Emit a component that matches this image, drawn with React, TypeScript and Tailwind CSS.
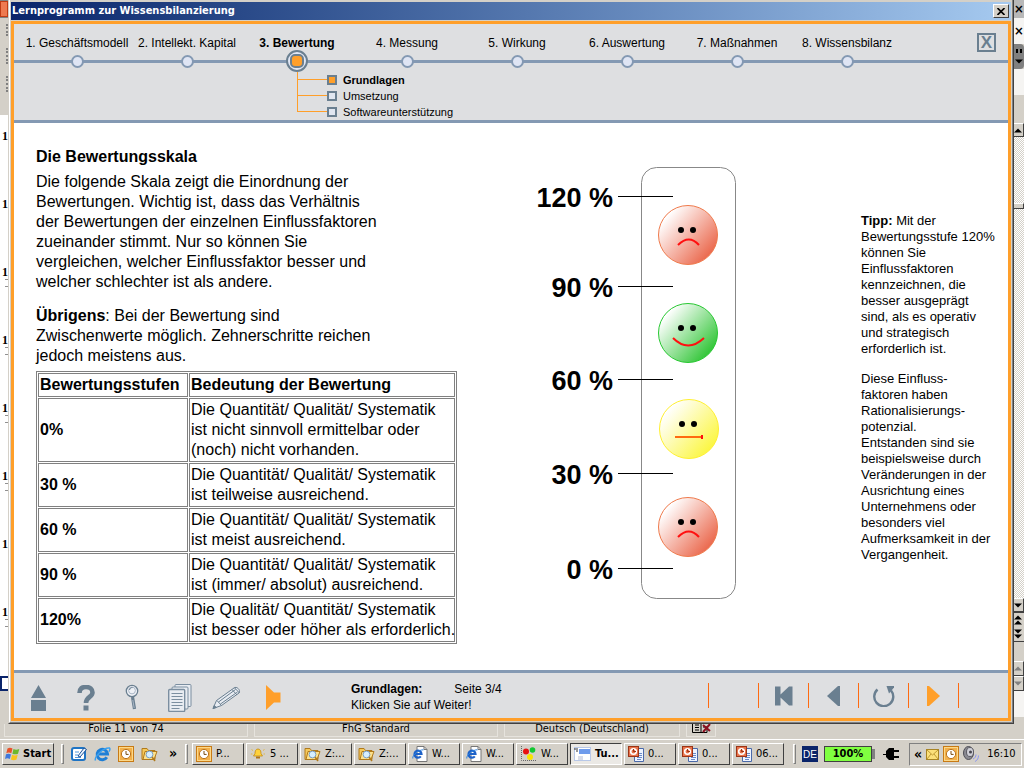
import React from 'react';
import clsx from 'clsx';

const chapters = [
  '1. Geschäftsmodell',
  '2. Intellekt. Kapital',
  '3. Bewertung',
  '4. Messung',
  '5. Wirkung',
  '6. Auswertung',
  '7. Maßnahmen',
  '8. Wissensbilanz',
];

const sections = ['Grundlagen', 'Umsetzung', 'Softwareunterstützung'];

const levels = [
  { value: '0%', lines: ['Die Quantität/ Qualität/ Systematik', 'ist nicht sinnvoll ermittelbar oder', '(noch) nicht vorhanden.'] },
  { value: '30 %', lines: ['Die Quantität/ Qualität/ Systematik', 'ist teilweise ausreichend.'] },
  { value: '60 %', lines: ['Die Quantität/ Qualität/ Systematik', 'ist meist ausreichend.'] },
  { value: '90 %', lines: ['Die Quantität/ Qualität/ Systematik', 'ist (immer/ absolut) ausreichend.'] },
  { value: '120%', lines: ['Die Qualität/ Quantität/ Systematik', 'ist besser oder höher als erforderlich.'] },
];

const raised = 'border border-t-white border-l-white border-r-[#404040] border-b-[#404040] bg-[#d4d0c8]';

const Lines = ({ lines }: { lines: string[] }) => (
  <>
    {lines.map((line, i) => (
      <React.Fragment key={line}>
        {i > 0 && <br />}
        {line}
      </React.Fragment>
    ))}
  </>
);

/* ---------- icons ---------- */

const ClockIcon = () => (
  <svg width="16" height="16" viewBox="0 0 16 16">
    <rect x="0.5" y="0.5" width="15" height="15" fill="#fbd88a" stroke="#c87a14" />
    <rect x="2" y="2" width="12" height="12" fill="#f3b04a" />
    <circle cx="8" cy="8" r="4.6" fill="#fff" stroke="#b8721c" />
    <path d="M8 5v3.4h2.6" fill="none" stroke="#7a4a10" />
  </svg>
);

const FolderIcon = () => (
  <svg width="17" height="16" viewBox="0 0 17 16">
    <path d="M1 2.500h5l1.500 2H14V13.500H1z" fill="#f6c95a" stroke="#b07a1c" />
    <path d="M2 13.500l2-8h12l-3 8z" fill="#fde18c" stroke="#b07a1c" />
    <circle cx="8.500" cy="8.500" r="3.400" fill="#d6efff" stroke="#7aa0c4" />
    <path d="M11 11l3 4" stroke="#b07a1c" strokeWidth="1.500" />
  </svg>
);

const IeIcon = () => (
  <svg width="17" height="16" viewBox="0 0 17 16">
    <path d="M12.800 11.200A5.200 5.200 0 1 1 13.500 8H5" fill="none" stroke="#1f7fd6" strokeWidth="3" />
    <path d="M1.500 14.500C0 11 9 1.500 15.500 2c1 1.200.2 2.500-.6 3.600" fill="none" stroke="#3aa0ee" strokeWidth="1.500" />
  </svg>
);

const IePageIcon = () => (
  <svg width="16" height="16" viewBox="0 0 16 16">
    <path d="M5 .5h7l3 3v12H5z" fill="#fff" stroke="#777" />
    <path d="M12 .5v3h3" fill="none" stroke="#777" />
    <path d="M8.800 10.300A3.500 3.500 0 1 1 9.500 8H3" fill="none" stroke="#1e62c8" strokeWidth="2.200" />
    <path d="M.8 12.500C0 9 7 3.500 11.500 3.800" fill="none" stroke="#2c83e0" />
  </svg>
);

const PptIcon = () => (
  <svg width="16" height="16" viewBox="0 0 16 16">
    <path d="M6.500 2.500h9v13h-9z" fill="#eef4ff" stroke="#4a69a8" />
    <path d="M9 7.500h5M9 9.500h5M9 11.500h5M9 13.500h4" stroke="#6a8ac8" />
    <rect x="0.5" y="0.5" width="10" height="10" fill="#e8744c" stroke="#9c3416" />
    <circle cx="5.500" cy="5.500" r="2.800" fill="none" stroke="#fff" strokeWidth="1.600" />
    <path d="M5.500 5.500V3M5.500 5.500H8" stroke="#9c3416" />
  </svg>
);

const DesktopIcon = () => (
  <svg width="16" height="16" viewBox="0 0 16 16">
    <rect x="1" y="2" width="13" height="12" rx="2" fill="#fff" stroke="#1f74c4" strokeWidth="2" />
    <path d="M4 6h4M4 9h3M4 11.500h6" stroke="#4f97dc" />
    <path d="M7 10l6-8 2.500 1.500L9 11z" fill="#eaf4ff" stroke="#1a4f94" />
  </svg>
);

const BellIcon = () => (
  <svg width="16" height="16" viewBox="0 0 16 16">
    <path d="M8 3c2.500 0 3 2.500 3 4.500L12.500 10h-9L5 7.500C5 5.500 5.500 3 8 3z" fill="#ffd23c" stroke="#c08a14" strokeWidth=".8" />
    <path d="M6 11.500h4" stroke="#b0761a" strokeWidth="2" />
    <path d="M1.500 3.500l1.500 1M14.500 3.500l-1.500 1M.8 8H2.500M15 8h-1.500" stroke="#e0b84a" />
  </svg>
);

const DotsIcon = () => (
  <svg width="17" height="16" viewBox="0 0 17 16">
    <path d="M1.500 0v14.500H17" fill="none" stroke="#666" strokeDasharray="1 1" />
    <circle cx="6" cy="5.500" r="3" fill="#e81010" />
    <circle cx="12.500" cy="4" r="2.800" fill="#12c832" />
    <circle cx="10" cy="11" r="3" fill="#f8e400" />
  </svg>
);

const TutorialIcon = () => (
  <svg width="17" height="16" viewBox="0 0 17 16">
    <rect x="0.5" y="1.500" width="16" height="13" fill="#fff" stroke="#b8c8e8" />
    <rect x="5" y="3" width="11" height="5" fill="#6f9cec" />
    <path d="M0 3h4M2 5h2" stroke="#333" />
    <rect x="4" y="10" width="5" height="4" fill="#d8dce8" />
  </svg>
);

const WindowsIcon = () => (
  <svg width="16" height="14" viewBox="0 0 16 14">
    <path d="M2.500 1.500C4.500.4 6 .8 7.500 1.600L6.300 6.300C4.800 5.500 3.300 5.300 1.300 6.200z" fill="#e8522a" />
    <path d="M8.500 2c1.800.9 3.600.9 5.800 0L13 6.700c-2 .9-3.800.8-5.600 0z" fill="#6cb82c" />
    <path d="M1 7.300c2-.9 3.500-.7 5 .1L4.800 12C3.300 11.200 1.800 11 0 11.900z" fill="#3f78dc" />
    <path d="M7.100 7.800c1.800.8 3.600.8 5.600 0l-1.200 4.700c-2 .9-3.800.8-5.600 0z" fill="#f8c41c" />
  </svg>
);

const PlugIcon = () => (
  <svg width="17" height="14" viewBox="0 0 17 14">
    <path d="M0 7h3V4l3-3h5v12H6l-3-3V8H0zM11 3h5v2h-5zM11 9h5v2h-5z" fill="#000" />
  </svg>
);

const MailIcon = () => (
  <svg width="13" height="11" viewBox="0 0 13 11">
    <rect x="0.500" y="0.500" width="12" height="10" fill="#fbe07a" stroke="#a88424" />
    <path d="M1 1l5.500 5L12 1M1 10l4-5M12 10L8 5" fill="none" stroke="#c09a34" />
  </svg>
);

const SpeakerIcon = () => (
  <svg width="16" height="16" viewBox="0 0 16 16">
    <ellipse cx="5.500" cy="7" rx="5" ry="6.500" fill="#8a8a92" stroke="#4c4c54" />
    <ellipse cx="7" cy="6" rx="3.500" ry="4.500" fill="#d0d0d8" stroke="#5a5a62" />
    <circle cx="7.500" cy="6" r="1.500" fill="#44444c" />
    <path d="M10 13c2-.8 3-2.500 3-4.500M12 15.500c2.500-1.200 3.500-3.500 3.500-6" fill="none" stroke="#8c96f0" />
  </svg>
);

const SpellIcon = () => (
  <svg width="20" height="10" viewBox="0 0 20 10">
    <path d="M1.500 0v8.500H10V0M10 8.500h6V2M4 1h4M4 3.500h4M4 6h4M12 3h3" fill="none" stroke="#000" />
    <path d="M12 1l7 6M19 0l-7 8" stroke="#8c1020" strokeWidth="2" />
  </svg>
);

const HomeIcon = () => (
  <svg width="17" height="26" viewBox="0 0 17 26">
    <path d="M8.500 0L16 13H1zM1 15h15v11H1z" fill="#6a7f90" />
  </svg>
);

const QuestionIcon = () => (
  <svg width="18" height="26" viewBox="0 0 18 26">
    <path d="M2.500 8C2.500 3.500 5 2 9 2s6.500 2 6.500 5.500C15.500 12 9 12 9 18" fill="none" stroke="#6a7f90" strokeWidth="4.600" />
    <rect x="6.500" y="20.500" width="5" height="5" fill="#6a7f90" />
  </svg>
);

const MagnifierIcon = () => (
  <svg width="15" height="27" viewBox="0 0 15 27">
    <circle cx="7" cy="7" r="5.700" fill="#eef1f6" stroke="#6a7f90" strokeWidth="1.300" />
    <circle cx="7" cy="6.500" r="3.400" fill="none" stroke="#a9b6c6" />
    <path d="M4.500 6c.4-1.800 1.600-2.600 3-2.400" fill="none" stroke="#6a7f90" />
    <path d="M7.500 13l2 12" stroke="#6a7f90" strokeWidth="3.200" />
    <path d="M7.800 16l1.400 8" stroke="#a9b6c6" />
  </svg>
);

const PagesIcon = () => (
  <svg width="24" height="28" viewBox="0 0 24 28" fill="#e8ecf2" stroke="#7b8ea0">
    <rect x="7" y="0.500" width="16" height="22" rx="1" />
    <rect x="4" y="3" width="16" height="22" rx="1" />
    <rect x="0.700" y="5.500" width="16" height="22" rx="1" strokeWidth="1.400" />
    <path d="M3.500 9.500h11M3.500 12.500h11M3.500 15.500h11M3.500 18.500h11M3.500 21.500h11M3.500 24.500h8" />
  </svg>
);

const PencilIcon = () => (
  <svg width="29" height="24" viewBox="0 0 29 24" fill="#e8ecf2" stroke="#6a7f90">
    <path d="M1 22.500l3.500-8L22 2c2.500-2.200 7 2 5 5L9.500 19.500z" />
    <path d="M5 14.500l4.500 5M6.500 16L23.500 3.500M8.500 18L25.500 6M20 3.500l5 5.500M22.500 1.800l5 5.200" />
    <path d="M1 22.500l1.300-3 2 2z" fill="#6a7f90" />
  </svg>
);

const SoundIcon = () => (
  <svg width="15" height="25" viewBox="0 0 15 25">
    <path d="M0 0v25l8-7.500h6.500v-10H8z" fill="#ff9f2a" />
  </svg>
);

const FirstIcon = () => (
  <svg width="18" height="20" viewBox="0 0 18 20">
    <path d="M0 .5h5.500v8L14 .5h3.500v19H14l-8.500-8v8H0z" fill="#6a7f90" />
  </svg>
);

const BackIcon = () => (
  <svg width="13" height="20" viewBox="0 0 13 20">
    <path d="M13 0v20h-2L0 10 11 0z" fill="#6a7f90" />
  </svg>
);

const RepeatIcon = () => (
  <svg width="22" height="22" viewBox="0 0 22 22">
    <path d="M4.500 4.500A9.500 9.500 0 1 0 18 5.500" fill="none" stroke="#6a7f90" strokeWidth="2.400" />
    <path d="M13.500 1H21v1.500L16 8.500z" fill="#6a7f90" />
  </svg>
);

const NextIcon = () => (
  <svg width="13" height="20" viewBox="0 0 13 20">
    <path d="M0 0h2l11 10L2 20H0z" fill="#ff9f2a" />
  </svg>
);

/* ---------- rating scale ---------- */

const marks = [
  { label: '120 %', y: 33 },
  { label: '90 %', y: 123 },
  { label: '60 %', y: 216 },
  { label: '30 %', y: 310 },
  { label: '0 %', y: 405 },
];

const faces = [
  { x: 155, y: 72, fill: 'url(#red)', stroke: '#ef7a4c', mouth: 'M145 82q11-11 21 0', color: '#ff1010' },
  { x: 155, y: 170, fill: 'url(#green)', stroke: '#28c832', mouth: 'M140 175q15 15 31 0', color: '#ff1010' },
  { x: 156, y: 266, fill: 'url(#yellow)', stroke: '#fff030', mouth: 'M142 274h27', color: '#ff6a10' },
  { x: 155, y: 364, fill: 'url(#red)', stroke: '#ef7a4c', mouth: 'M145 374q11-11 21 0', color: '#ff1010' },
];

const gradients = [
  { id: 'red', color: '#ea6448' },
  { id: 'green', color: '#2cc432' },
  { id: 'yellow', color: '#fbf63c' },
];

const Scale = () => (
  <svg width="206" height="440" viewBox="0 0 206 440" className="shrink-0" role="img" aria-label="Bewertungsskala">
    <defs>
      {gradients.map((g) => (
        <linearGradient key={g.id} id={g.id} x1="0.1" y1="0.15" x2="0.9" y2="0.85">
          <stop offset="0.05" stopColor="#fff" />
          <stop offset="1" stopColor={g.color} />
        </linearGradient>
      ))}
    </defs>
    <rect x="108.500" y="4.500" width="94" height="431" rx="15" fill="#fff" stroke="#888" />
    {marks.map((m) => (
      <g key={m.label}>
        <text x="80" y={m.y + 11} textAnchor="end" className="font-['Liberation_Sans',sans-serif] text-[27px] font-bold">
          {m.label}
        </text>
        <path d={`M85 ${m.y + 0.5}h55`} stroke="#000" />
      </g>
    ))}
    {faces.map((f) => (
      <g key={f.y}>
        <circle cx={f.x} cy={f.y} r="29.500" fill={f.fill} stroke={f.stroke} />
        <circle cx={f.x - 7} cy={f.y - 5} r="3" />
        <circle cx={f.x + 5} cy={f.y - 5} r="3" />
        <path d={f.mouth} fill="none" stroke={f.color} strokeWidth="2" />
      </g>
    ))}
    <path d="M169 272v4" stroke="#ff1010" strokeWidth="2" />
  </svg>
);

/* ---------- learning program window ---------- */

const TitleBar = () => (
  <div className="flex h-[18px] items-center justify-between bg-linear-to-r from-[#0a246a] to-[#a6caf0] pr-0.5">
    <h1 className="pl-px font-['DejaVu_Sans_Condensed','DejaVu_Sans',sans-serif] text-[11px] font-bold text-white">
      Lernprogramm zur Wissensbilanzierung
    </h1>
    <button aria-label="Schließen" className={clsx(raised, 'flex h-3.5 w-4 items-center justify-center')}>
      <svg width="8" height="7" viewBox="0 0 8 7">
        <path d="M.5 0l7 7M7.500 0l-7 7" stroke="#000" strokeWidth="1.600" />
      </svg>
    </button>
  </div>
);

const Header = () => (
  <header className="border-b-[3px] border-[#8499b3] bg-[#dedfe1] text-[12px]">
    <div className="grid">
      <div className="col-start-1 row-start-1 mb-[9px] h-[3px] self-end bg-[#8499b3]" />
      <div className="col-start-1 row-start-1 flex">
        <nav className="ml-2 grid flex-1 grid-cols-8">
          {chapters.map((chapter, i) => (
            <button key={chapter} className="flex flex-col items-center whitespace-nowrap">
              <span className={clsx('pt-3 leading-[14px]', i === 2 && 'font-bold')}>{chapter}</span>
              <span className="flex h-[22px] items-center">
                {i === 2 ? (
                  <span className="flex size-[22px] items-center justify-center rounded-full border-2 border-[#6a7f90] bg-[#e0e6f4]">
                    <span className="size-3.5 rounded-[5px] border-2 border-[#6a7f90] bg-[#ff9f2a]" />
                  </span>
                ) : (
                  <span className="size-[13px] rounded-full border-2 border-[#8499b3] bg-[#dfe5f4]" />
                )}
              </span>
            </button>
          ))}
        </nav>
        <div className="flex w-[106px] justify-end pt-[9px] pr-3">
          <button className="flex size-[19px] items-center justify-center border-2 border-[#6a7f90] text-[17px] leading-none font-bold text-[#6a7f90]">
            X
          </button>
        </div>
      </div>
    </div>
    <div className="mr-[106px] ml-2 grid grid-cols-8">
      <ul className="col-span-3 col-start-3 pl-[55px] text-[11px]">
        {sections.map((section, i) => (
          <li key={section} className="flex h-4 items-center">
            <span className="flex h-4 w-[30px] flex-col">
              <span className="h-2 border-b border-l border-[#ff9f2a]" />
              {i < 2 && <span className="h-2 border-l border-[#ff9f2a]" />}
            </span>
            <span className={clsx('size-2.5 border-2 border-[#6a7f90]', i === 0 ? 'bg-[#ff9f2a]' : 'bg-[#e0e6f0]')} />
            <a href="#" className={clsx('ml-1.5', i === 0 && 'font-bold')}>
              {section}
            </a>
          </li>
        ))}
      </ul>
    </div>
  </header>
);

const Content = () => (
  <main className="flex flex-1 items-start bg-white pl-[22px] text-black">
    <section className="w-[419px] pt-6 text-[16px] leading-5">
      <h2 className="font-bold">Die Bewertungsskala</h2>
      <p className="mt-[5px] whitespace-nowrap">
        <Lines
          lines={[
            'Die folgende Skala zeigt die Einordnung der',
            'Bewertungen. Wichtig ist, dass das Verhältnis',
            'der Bewertungen der einzelnen Einflussfaktoren',
            'zueinander stimmt. Nur so können Sie',
            'vergleichen, welcher Einflussfaktor besser und',
            'welcher schlechter ist als andere.',
          ]}
        />
      </p>
      <p className="mt-3.5 whitespace-nowrap">
        <b>Übrigens</b>
        <Lines lines={[': Bei der Bewertung sind', 'Zwischenwerte möglich. Zehnerschritte reichen', 'jedoch meistens aus.']} />
      </p>
      <table className="mt-[5px] w-[421px] table-fixed border-separate border-spacing-px border border-[#808080] text-left whitespace-nowrap">
        <thead>
          <tr>
            <th className="w-[150px] border border-[#808080] p-px">Bewertungsstufen</th>
            <th className="border border-[#808080] p-px">Bedeutung der Bewertung</th>
          </tr>
        </thead>
        <tbody>
          {levels.map((level) => (
            <tr key={level.value}>
              <th className="border border-[#808080] p-px">{level.value}</th>
              <td className="border border-[#808080] p-px">
                <Lines lines={level.lines} />
              </td>
            </tr>
          ))}
        </tbody>
      </table>
    </section>
    <div className="flex flex-1 justify-center pt-10 pr-11">
      <Scale />
    </div>
    <aside className="w-[147px] pt-[90px] text-[13px] leading-4 whitespace-nowrap">
      <p>
        <b>Tipp:</b>{' '}
        <Lines
          lines={[
            'Mit der',
            'Bewertungsstufe 120%',
            'können Sie',
            'Einflussfaktoren',
            'kennzeichnen, die',
            'besser ausgeprägt',
            'sind, als es operativ',
            'und strategisch',
            'erforderlich ist.',
          ]}
        />
      </p>
      <p className="mt-3.5">
        <Lines
          lines={[
            'Diese Einfluss-',
            'faktoren haben',
            'Rationalisierungs-',
            'potenzial.',
            'Entstanden sind sie',
            'beispielsweise durch',
            'Veränderungen in der',
            'Ausrichtung eines',
            'Unternehmens oder',
            'besonders viel',
            'Aufmerksamkeit in der',
            'Vergangenheit.',
          ]}
        />
      </p>
    </aside>
  </main>
);

const tools = [
  { label: 'Start', icon: <HomeIcon /> },
  { label: 'Hilfe', icon: <QuestionIcon /> },
  { label: 'Suche', icon: <MagnifierIcon /> },
  { label: 'Dokumente', icon: <PagesIcon /> },
  { label: 'Notizen', icon: <PencilIcon /> },
  { label: 'Ton', icon: <SoundIcon /> },
];

const pager = [
  { label: 'Anfang', icon: <FirstIcon /> },
  { label: 'Zurück', icon: <BackIcon /> },
  { label: 'Wiederholen', icon: <RepeatIcon /> },
  { label: 'Weiter', icon: <NextIcon /> },
];

const Footer = () => (
  <footer className="flex h-12 items-center border-t-[3px] border-[#8499b3] bg-[#dedfe1] pl-px">
    {tools.map((tool) => (
      <button key={tool.label} aria-label={tool.label} className="flex w-[47px] items-center justify-center pt-1">
        {tool.icon}
      </button>
    ))}
    <div className="ml-[54px] pt-0.5 text-[12px] leading-4">
      <p className="flex gap-8">
        <b>Grundlagen:</b>
        <span>Seite 3/4</span>
      </p>
      <p>Klicken Sie auf Weiter!</p>
    </div>
    <div className="mr-[49px] ml-auto flex h-[25px] border-r border-[#ff6a10]">
      <span className="w-[50px] border-l border-[#ff6a10]" />
      {pager.map((item) => (
        <button key={item.label} aria-label={item.label} className="flex w-[50px] items-center justify-center border-l border-[#ff6a10]">
          {item.icon}
        </button>
      ))}
    </div>
  </footer>
);

/* ---------- what shows of the windows behind ---------- */

const LeftEdge = () => (
  <div className="flex w-2 flex-col overflow-hidden bg-white font-['Liberation_Serif',serif] text-[12px] font-bold">
    <div className="flex h-[18px] items-center bg-[#808080]">
      <span className="h-4 w-2 border border-[#c03c14] bg-[#ee7a50]" />
    </div>
    <div className="flex h-[97px] flex-col gap-3 bg-[#d4d0c8] pt-1.5 pl-1.5">
      <span className="h-3 border-l-2 border-dotted border-[#808080]" />
      <span className="h-4 border-l-2 border-dotted border-[#808080]" />
      <span className="h-4 border-l-2 border-dotted border-[#808080]" />
    </div>
    <div className="flex-1 pt-3.5">
      {[0, 1, 2, 3, 4, 5, 6, 7].map((n) => (
        <div key={n} className="h-[68px] pl-0.5 leading-[14px]">
          1
          <span className={clsx('ml-[3px] block h-2 w-1 border-y border-[#909090]', (n === 0 || n === 1 || n === 6) && 'invisible')} />
        </div>
      ))}
    </div>
    <div className="h-[15px] border-2 border-r-0 border-[#0a246a] bg-white" />
    <div className="h-[33px] bg-[#d4d0c8]" />
  </div>
);

const Arrow = ({ down, muted }: { down?: boolean; muted?: boolean }) => (
  <svg width="8" height="5" viewBox="0 0 8 5">
    <path d={down ? 'M0 .5h8l-4 4z' : 'M0 4.500h8l-4-4z'} fill={muted ? '#808080' : '#000'} />
  </svg>
);

const RightEdge = () => (
  <div className="flex w-2.5 flex-col overflow-hidden bg-[#d4d0c8]">
    <div className="flex h-[18px] items-center bg-[#b8b8b8] text-[13px] font-bold">×</div>
    <div className="flex h-[26px] items-center bg-[#f5f4f2] text-[13px] font-bold">×</div>
    <div className="flex h-[25px] flex-col items-center justify-center gap-1.5 rounded-r-sm bg-[#808080]">
      <span className="h-1 w-1.5 border-x-2 border-black" />
      <Arrow down />
    </div>
    <div className="h-[26px] bg-[#f5f4f2]" />
    <div className="h-7" />
    <div className={clsx(raised, 'flex h-3.5 items-center border-l-0')}>
      <Arrow />
    </div>
    <div className="flex flex-1 flex-col bg-[repeating-conic-gradient(#fff_0_25%,#d4d0c8_0_50%)] bg-[length:2px_2px]">
      <div className={clsx(raised, 'mt-[66px] h-1.5 border-l-0')} />
    </div>
    <div className={clsx(raised, 'flex h-3.5 items-center border-l-0')}>
      <Arrow down />
    </div>
    <div className="flex h-[15px] flex-col justify-center border-t border-[#404040]">
      <Arrow />
      <Arrow />
    </div>
    <div className="flex h-[15px] flex-col justify-center border-b border-[#404040]">
      <Arrow down />
      <Arrow down />
    </div>
    <div className="h-[19px]" />
    <div className={clsx(raised, 'flex h-[15px] items-center border-l-0')}>
      <Arrow muted />
    </div>
    <div className={clsx(raised, 'flex h-[15px] items-center border-l-0')}>
      <Arrow down muted />
    </div>
    <div className="h-[26px] bg-[#f5f4f2]" />
    <div className="h-[7px]" />
  </div>
);

const StatusBar = () => (
  <div className="flex h-[15px] gap-1.5 pb-0.5 pl-1 text-center leading-[9px] whitespace-nowrap *:border *:border-t-0 *:border-[#e6e3dd]">
    <span className="w-[244px]">Folie 11 von 74</span>
    <span className="w-[244px]">FhG Standard</span>
    <span className="w-44">Deutsch (Deutschland)</span>
    <span className="flex w-[30px] justify-center">
      <SpellIcon />
    </span>
  </div>
);

const tasks = [
  { label: 'P...', icon: <ClockIcon /> },
  { label: '5 ...', icon: <BellIcon /> },
  { label: 'Z:...', icon: <FolderIcon /> },
  { label: 'Z:...', icon: <FolderIcon /> },
  { label: 'W...', icon: <IePageIcon /> },
  { label: 'W...', icon: <IePageIcon /> },
  { label: 'W...', icon: <DotsIcon /> },
  { label: 'Tu...', icon: <TutorialIcon />, active: true },
  { label: '0...', icon: <PptIcon /> },
  { label: '0...', icon: <PptIcon /> },
  { label: '06...', icon: <PptIcon /> },
];

const Grip = () => <span className="h-5 w-[3px] border border-t-white border-r-[#808080] border-b-[#808080] border-l-white" />;

const TaskBar = () => (
  <div className="flex h-[29px] items-center border-t border-white px-0.5 whitespace-nowrap">
    <button className={clsx(raised, 'flex h-[22px] w-[52px] items-center gap-0.5 pl-0.5 font-bold')}>
      <WindowsIcon />
      Start
    </button>
    <div className="ml-[7px] flex items-center">
      <Grip />
    </div>
    <div className="ml-[7px] flex w-28 items-center gap-[7px]">
      <DesktopIcon />
      <IeIcon />
      <ClockIcon />
      <FolderIcon />
      <span className="ml-1 self-start text-[14px] leading-none font-bold">»</span>
    </div>
    <div className="ml-0.5 flex items-center">
      <Grip />
    </div>
    <div className="ml-1 flex gap-0.5">
      {tasks.map((task, i) => (
        <button
          key={i}
          className={clsx(
            'flex h-[22px] w-[52px] items-center gap-1 pl-[3px]',
            task.active
              ? 'border border-t-[#404040] border-r-white border-b-white border-l-[#404040] bg-[#ebe9e5] font-bold'
              : raised
          )}
        >
          <span className="shrink-0">{task.icon}</span>
          {task.label}
        </button>
      ))}
    </div>
    <div className="ml-[9px] flex items-center">
      <Grip />
    </div>
    <span className="ml-1.5 flex h-4 w-4 items-center justify-center bg-[#0a246a] font-['Liberation_Sans',sans-serif] text-[10px] text-white">
      DE
    </span>
    <span className="ml-1.5 flex items-center">
      <span className="flex h-4 w-12 items-center justify-center border border-[#404040] bg-[#80ff40] font-bold">100%</span>
      <span className="h-2.5 w-[3px] bg-[#808080]" />
    </span>
    <span className="ml-2">
      <PlugIcon />
    </span>
    <div className="ml-auto flex h-[23px] w-[113px] items-center gap-1 border border-t-[#808080] border-r-white border-b-white border-l-[#808080] pl-1">
      <span className="text-[14px] leading-none font-bold">«</span>
      <MailIcon />
      <ClockIcon />
      <SpeakerIcon />
      <span className="ml-1">16:10</span>
    </div>
  </div>
);

export default function App() {
  return (
    <div className="flex min-h-screen w-full flex-col bg-[#d4d0c8] font-['DejaVu_Sans_Condensed','DejaVu_Sans',sans-serif] text-[11px] text-black">
      <div className="flex flex-1">
        <LeftEdge />
        <div className="flex flex-1 flex-col border-r border-b border-l border-r-[#404040] border-b-[#404040] border-l-[#d4d0c8]">
          <div className="flex flex-1 flex-col border-r border-b border-l border-r-[#808080] border-b-[#808080] border-l-white">
            <div className="flex flex-1 flex-col border border-t-2 border-[#d4d0c8]">
              <TitleBar />
              <div className="mt-px flex flex-1 flex-col border-[3px] border-[#ff9f2a] font-['Liberation_Sans',Arial,sans-serif]">
                <Header />
                <Content />
                <Footer />
              </div>
            </div>
          </div>
        </div>
        <RightEdge />
      </div>
      <StatusBar />
      <TaskBar />
    </div>
  );
}
